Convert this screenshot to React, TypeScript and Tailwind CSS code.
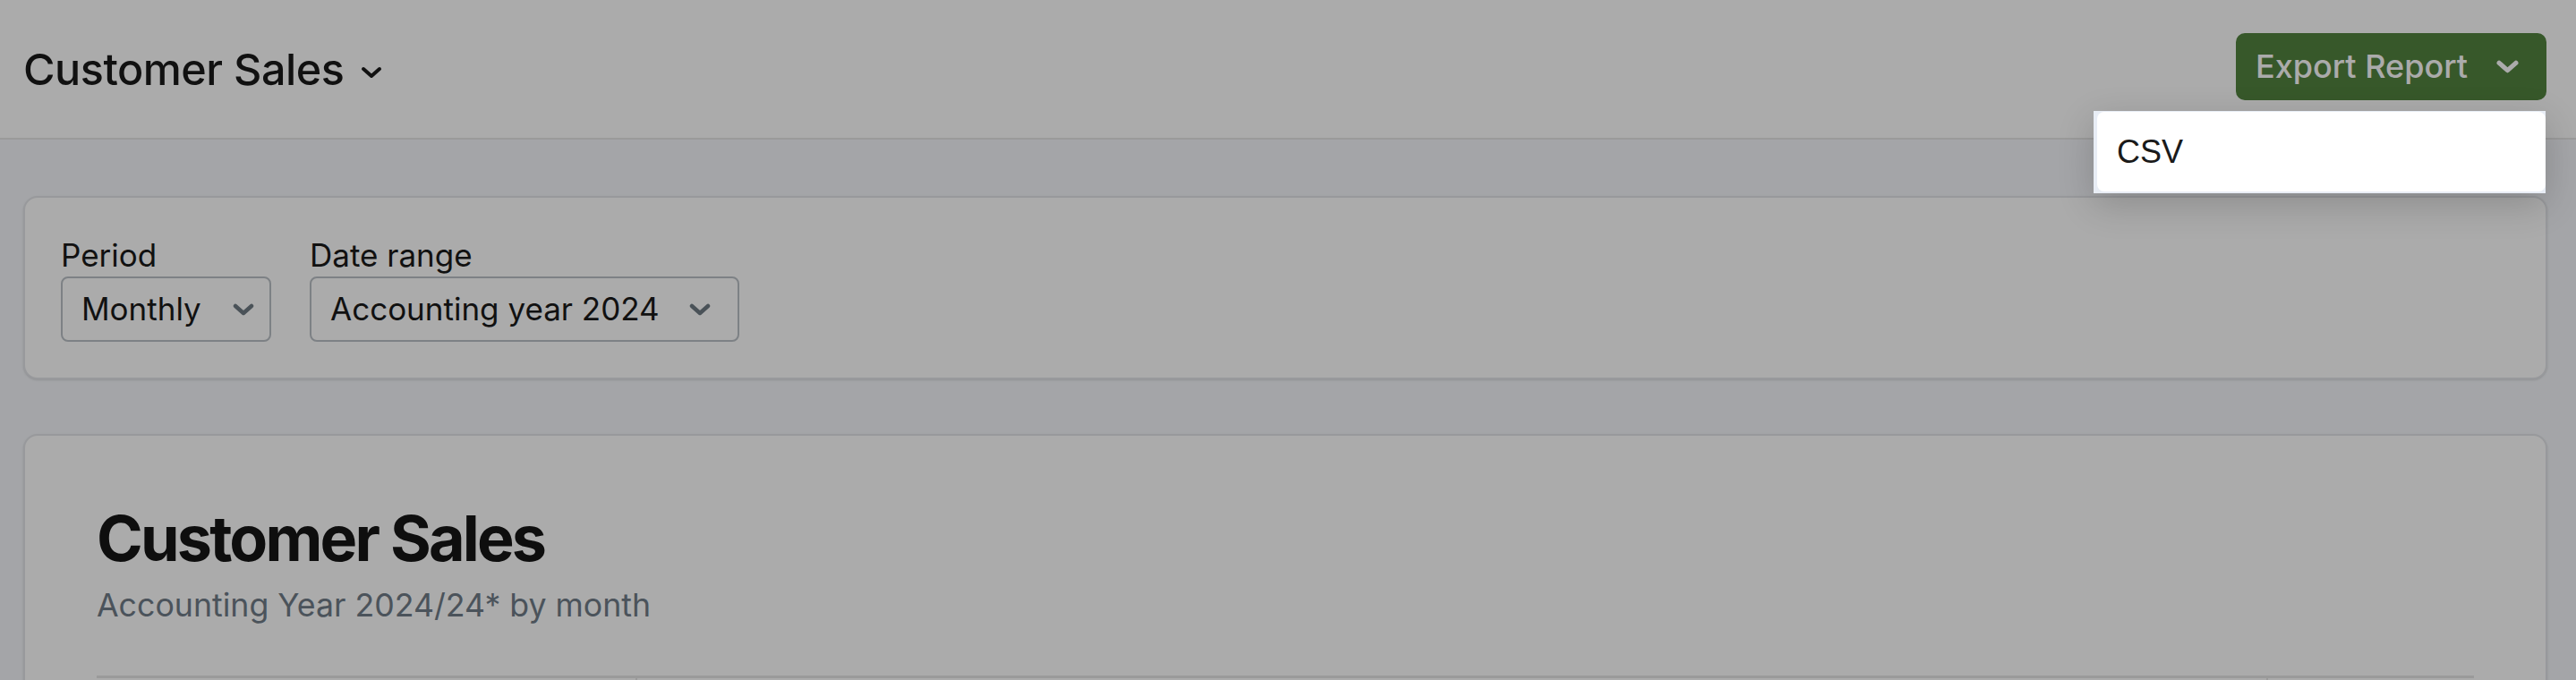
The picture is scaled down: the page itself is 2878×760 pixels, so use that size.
import { ReactNode } from 'react'

function Chevron({ className, strokeWidth = 4 }: { className?: string; strokeWidth?: number }) {
  return (
    <svg viewBox="0 0 24 14" fill="none" className={className}>
      <polyline
        points="3,3 12,11 21,3"
        stroke="currentColor"
        strokeWidth={strokeWidth}
        strokeLinecap="round"
        strokeLinejoin="round"
      />
    </svg>
  )
}

function Field({ label, value, className }: { label: string; value: string; className: string }) {
  return (
    <div className="flex flex-col">
      <span className="text-[35px] leading-[48px] text-[#1a1a1a]">{label}</span>
      <button
        className={`h-[73px] flex items-center justify-between pl-[21px] border-2 border-[#bbc1c7] rounded-[8px] bg-white text-[35px] text-[#1a1a1a] ${className}`}
      >
        <span>{value}</span>
        <Chevron className="w-[24px] h-[14px] text-[#6f7b84]" strokeWidth={4.5} />
      </button>
    </div>
  )
}

function Card({ children, className }: { children: ReactNode; className?: string }) {
  return (
    <div className={`bg-white border-2 border-[#e3e5e9] rounded-[16px] shadow-sm ${className ?? ''}`}>
      {children}
    </div>
  )
}

export default function App() {
  return (
    <div className="relative w-[2878px] h-[760px] overflow-hidden bg-[#f5f7fb] font-['Inter',sans-serif]">
      <header className="h-[156px] flex items-center justify-between pl-[26px] pr-[33px] bg-white border-b-2 border-[#e6e6e6]">
        <div className="flex items-center gap-[19px]">
          <h1 className="text-[48.5px] mt-[2px] font-medium tracking-[-0.01em] text-[#1a1a1a]">Customer Sales</h1>
          <Chevron className="w-[24px] h-[14px] text-[#1a1a1a] mt-[8px]" />
        </div>
        <button className="h-[75px] w-[347px] -mt-[6px] flex items-center justify-between pl-[22px] pr-[31px] rounded-[10px] bg-[#52833f] text-white text-[36px] font-medium">
          <span>Export Report</span>
          <Chevron className="w-[25px] h-[15px]" strokeWidth={5} />
        </button>
      </header>

      <main className="flex flex-col gap-[61px] pt-[63px] pl-[26px] pr-[32px]">
        <Card className="p-[40px]">
          <div className="flex gap-[43px]">
            <Field label="Period" value="Monthly" className="w-[235px] pr-[17px]" />
            <Field label="Date range" value="Accounting year 2024" className="w-[480px] pr-[30px]" />
          </div>
        </Card>

        <Card className="px-[80px] pt-[80px] pb-[40px]">
          <h2 className="text-[70px] leading-none font-bold tracking-[-0.04em] text-[#161616]">Customer Sales</h2>
          <p className="mt-[12px] text-[35.7px] leading-[54px] text-[#707c88]">Accounting Year 2024/24* by month</p>
          <div className="mt-[52px] grid grid-cols-[602px_1822px_1fr] border-t-[3px] border-[#e6e6e6] h-[120px]">
            <div />
            <div className="border-l-2 border-[#e6e6e6]" />
            <div className="border-l-2 border-[#e6e6e6]" />
          </div>
        </Card>
      </main>

      <div className="absolute inset-0 bg-[rgba(0,0,0,0.33)]" />

      <div className="absolute left-[2339px] top-[124px] w-[505px] h-[92px] bg-[#e8edf5] shadow-[0_12px_40px_rgba(0,0,0,0.18)]">
        <div className="ml-[4px] mt-[1px] h-[89px] bg-white rounded-[8px] flex items-center pl-[22px] font-['Liberation_Sans',Arial,sans-serif] text-[36px] text-[#1a1a1a]">
          CSV
        </div>
      </div>
    </div>
  )
}
